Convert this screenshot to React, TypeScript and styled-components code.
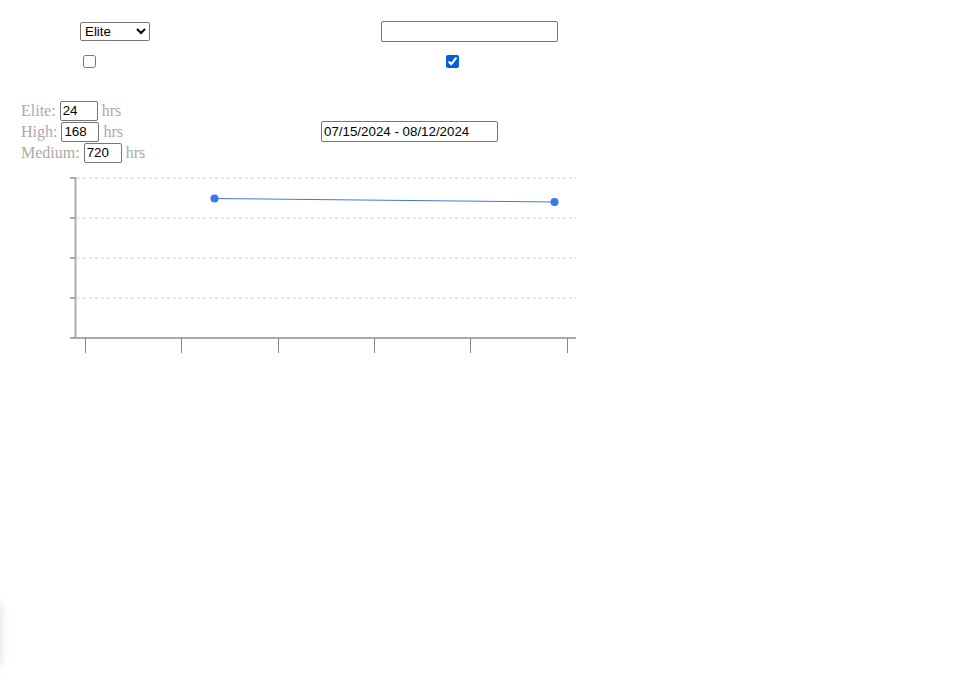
import React, { useState } from "react";
import styled, { createGlobalStyle } from "styled-components";

const GlobalStyle = createGlobalStyle`
  body {
    margin: 8px;
    font-family: "Liberation Serif", "Times New Roman", serif;
    font-size: 16px;
    background: #ffffff;
  }
`;

const Filters = styled.div`
  display: grid;
  grid-template-columns: 301px 1fr;
  grid-template-rows: 21px 13px;
  row-gap: 13px;
  padding: 13px 0 0 72px;
  align-items: center;
`;

const Select = styled.select`
  width: 70px;
  height: 19px;
  box-sizing: border-box;
  font-family: "Liberation Sans", Arial, sans-serif;
  font-size: 13.33px;
  border: 1px solid #767676;
  border-radius: 2px;
  background: #fff;
  color: #000;
  padding: 0;
  margin: 0;
`;

const TextInput = styled.input<{ $w: number; $h?: number }>`
  width: ${(p) => p.$w}px;
  height: ${(p) => p.$h ?? 21}px;
  box-sizing: border-box;
  font-family: "Liberation Sans", Arial, sans-serif;
  font-size: 13.33px;
  border: 1px solid #767676;
  border-radius: 2px;
  padding: 1px 2px;
  margin: 0;
  color: #000;
`;

const Check = styled.input<{ $offset: number }>`
  width: 13px;
  height: 13px;
  margin: 0 0 0 ${(p) => p.$offset}px;
  accent-color: #0060df;
`;

const Thresholds = styled.div`
  display: flex;
  align-items: center;
  margin-top: 32px;
  padding-left: 13px;
`;

const Levels = styled.div`
  width: 300px;
  display: flex;
  flex-direction: column;
`;

const LevelRow = styled.div`
  display: flex;
  align-items: center;
  gap: 4px;
  height: 21px;
  color: #aaaaaa;
`;

const Chart = styled.svg`
  display: block;
  margin: 7px 0 0 52px;
`;

const OffscreenToast = styled.div`
  position: fixed;
  left: -320px;
  bottom: 14px;
  width: 320px;
  height: 66px;
  background: #fff;
  border-radius: 4px;
  box-shadow: 0 1px 10px rgba(0, 0, 0, 0.1), 0 2px 15px rgba(0, 0, 0, 0.05);
`;

const levels = [
  { name: "Elite", hours: "24" },
  { name: "High", hours: "168" },
  { name: "Medium", hours: "720" },
];

const gridY = [8, 48, 88, 128];
const tickX = [25, 121, 218, 314, 410, 507];
const points = [
  { x: 154.5, y: 28.5 },
  { x: 494.5, y: 32 },
];

export default function App() {
  const [level, setLevel] = useState("Elite");
  return (
    <>
      <GlobalStyle />
      <Filters>
        <Select value={level} onChange={(e) => setLevel(e.target.value)}>
          <option>Elite</option>
          <option>High</option>
          <option>Medium</option>
          <option>Low</option>
        </Select>
        <TextInput $w={177} type="text" defaultValue="" />
        <Check $offset={3} type="checkbox" />
        <Check $offset={65} type="checkbox" defaultChecked />
      </Filters>
      <Thresholds>
        <Levels>
          {levels.map((l) => (
            <LevelRow key={l.name}>
              <span>{l.name}:</span>
              <TextInput $w={38} $h={20} type="text" defaultValue={l.hours} />
              <span>hrs</span>
            </LevelRow>
          ))}
        </Levels>
        <TextInput $w={177} type="text" defaultValue="07/15/2024 - 08/12/2024" />
      </Thresholds>
      <Chart width={520} height={185} viewBox="0 0 520 185">
        {gridY.map((y) => (
          <line
            key={`g${y}`}
            x1={17}
            x2={516}
            y1={y}
            y2={y}
            stroke="#dddddd"
            strokeWidth={1.5}
            strokeDasharray="3 3"
          />
        ))}
        {gridY.map((y) => (
          <line key={`t${y}`} x1={10} x2={16} y1={y} y2={y} stroke="#aaaaaa" strokeWidth={2} />
        ))}
        <line x1={15.5} x2={15.5} y1={7} y2={168} stroke="#aaaaaa" strokeWidth={2} />
        <line x1={10} x2={516} y1={168} y2={168} stroke="#aaaaaa" strokeWidth={2} />
        {tickX.map((x) => (
          <line key={`x${x}`} x1={x + 0.5} x2={x + 0.5} y1={168} y2={183} stroke="#888888" strokeWidth={1} />
        ))}
        <line
          x1={points[0].x}
          y1={points[0].y}
          x2={points[1].x}
          y2={points[1].y}
          stroke="#3b76f0"
          strokeWidth={1}
        />
        {points.map((p) => (
          <circle key={p.x} cx={p.x} cy={p.y} r={4} fill="#3b76f0" />
        ))}
      </Chart>
      <OffscreenToast />
    </>
  );
}
